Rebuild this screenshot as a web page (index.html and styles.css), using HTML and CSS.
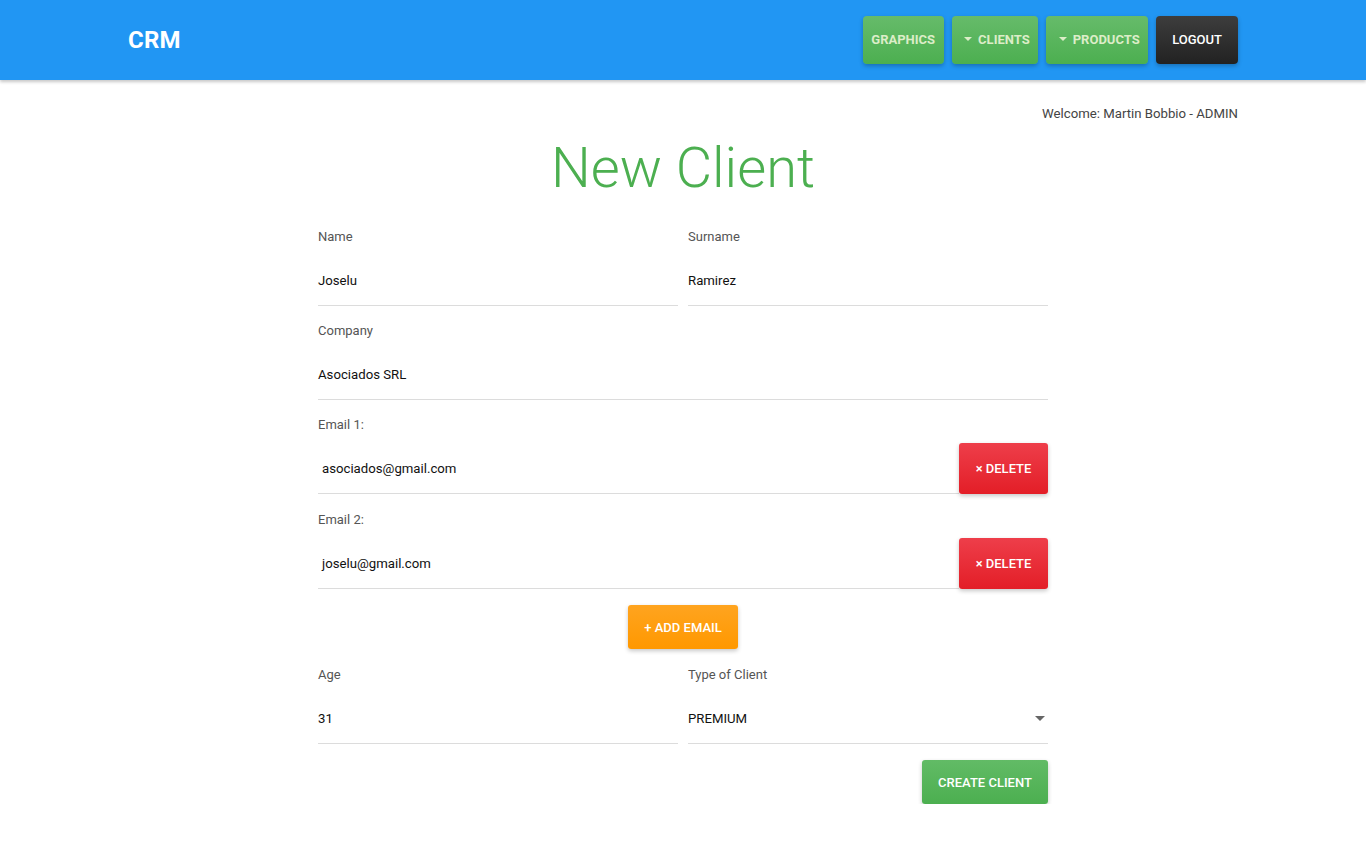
FILE: index.html
```html
<!DOCTYPE html>
<html lang="en">
<head>
<meta charset="utf-8">
<title>CRM - New Client</title>
<link rel="stylesheet" href="styles.css">
</head>
<body>
<header class="topbar">
  <div class="container topbar-inner">
    <a class="brand" href="#">CRM</a>
    <nav class="nav">
      <a class="nav-btn green" href="#">GRAPHICS</a>
      <a class="nav-btn green" href="#"><span class="caret"></span>CLIENTS</a>
      <a class="nav-btn green" href="#"><span class="caret"></span>PRODUCTS</a>
      <a class="nav-btn dark" href="#">LOGOUT</a>
    </nav>
  </div>
</header>

<main class="container">
  <p class="welcome">Welcome: Martin Bobbio - ADMIN</p>
  <h1 class="title">New Client</h1>

  <form class="form">
    <div class="row">
      <div class="group">
        <label class="label">Name</label>
        <div class="input">Joselu</div>
      </div>
      <div class="group">
        <label class="label">Surname</label>
        <div class="input">Ramirez</div>
      </div>
    </div>

    <div class="group">
      <label class="label">Company</label>
      <div class="input">Asociados SRL</div>
    </div>

    <div class="group email-group">
      <label class="label">Email 1:</label>
      <div class="email-row">
        <div class="input email">asociados@gmail.com</div>
        <button type="button" class="btn red">× DELETE</button>
      </div>
    </div>

    <div class="group email-group">
      <label class="label">Email 2:</label>
      <div class="email-row">
        <div class="input email">joselu@gmail.com</div>
        <button type="button" class="btn red">× DELETE</button>
      </div>
    </div>

    <div class="center">
      <button type="button" class="btn orange add">+ ADD EMAIL</button>
    </div>

    <div class="row">
      <div class="group">
        <label class="label">Age</label>
        <div class="input">31</div>
      </div>
      <div class="group">
        <label class="label">Type of Client</label>
        <div class="input select">PREMIUM<span class="sel-caret"></span></div>
      </div>
    </div>

    <div class="right">
      <button type="button" class="btn green-btn create">CREATE CLIENT</button>
    </div>
  </form>
</main>
</body>
</html>
```

FILE: styles.css
```css
* { box-sizing: border-box; }

html, body {
  margin: 0;
  padding: 0;
}

body {
  font-family: Roboto, "Liberation Sans", Arial, sans-serif;
  color: #212529;
  background: #fff;
  font-size: 14px;
}

.container {
  width: 1110px;
  margin: 0 auto;
}

.topbar {
  background: #2196f3;
  height: 80px;
  box-shadow: 0 2px 3px rgba(0,0,0,0.22);
}

.topbar-inner {
  height: 80px;
  display: flex;
  align-items: center;
  justify-content: space-between;
}

.brand {
  color: #fff;
  font-weight: 700;
  font-size: 24px;
  text-decoration: none;
  letter-spacing: 0.2px;
}

.nav {
  display: flex;
  gap: 8px;
  align-items: center;
}

.nav-btn {
  height: 48px;
  display: flex;
  align-items: center;
  border-radius: 4px;
  text-decoration: none;
  font-size: 13px;
  padding-bottom: 2px;
  box-shadow: 0 2px 4px rgba(0,0,0,0.25);
}

.nav-btn.green {
  background: linear-gradient(#66bb6a, #4caf50);
  color: #dcedc8;
  font-weight: 700;
  padding-left: 8.5px;
  padding-right: 8.5px;
}

.nav-btn.dark {
  background: linear-gradient(#3d3d3d, #222);
  color: #fff;
  font-weight: 500;
  padding-left: 16px;
  padding-right: 16px;
}

.caret {
  width: 0;
  height: 0;
  border-left: 4px solid transparent;
  border-right: 4px solid transparent;
  border-top: 4px solid #dcedc8;
  margin: 0 6px 0 4px;
}

.welcome {
  margin: 0;
  padding-top: 25px;
  text-align: right;
  font-size: 13.2px;
  line-height: 17px;
  color: #444;
}

.title {
  margin: 11px 0 0;
  text-align: center;
  font-weight: 300;
  font-size: 56px;
  line-height: 70px;
  color: #4caf50;
}

.form {
  width: 730px;
  margin: 0 auto;
  padding-top: 24px;
}

.row {
  display: flex;
  gap: 10px;
}

.row > .group {
  flex: 1;
}

.group {
  margin-bottom: 15px;
}

.email-group {
  margin-bottom: 16px;
}

.label {
  display: block;
  font-size: 13px;
  line-height: 20px;
  color: #555;
  margin-bottom: 10px;
}

.input {
  height: 49px;
  border-bottom: 1px solid #dcdcdc;
  display: flex;
  align-items: center;
  font-size: 13.2px;
  color: #111;
  padding-bottom: 2px;
}

.email-row {
  display: flex;
  align-items: flex-end;
  margin-top: -2px;
}

.input.email {
  flex: 1;
  height: 51px;
  padding-left: 4px;
  padding-bottom: 0;
}

.select {
  justify-content: space-between;
  padding-right: 3px;
}

.sel-caret {
  width: 0;
  height: 0;
  border-left: 5px solid transparent;
  border-right: 5px solid transparent;
  border-top: 5px solid #666;
}

.btn {
  border: none;
  border-radius: 3px;
  font-family: Roboto, "Liberation Sans", Arial, sans-serif;
  font-size: 13px;
  font-weight: 500;
  color: #fff;
  box-shadow: 0 2px 4px rgba(0,0,0,0.22);
  cursor: pointer;
}

.btn.red {
  width: 89px;
  height: 51px;
  background: linear-gradient(#ee3e4a, #e31e27);
}

.center {
  display: flex;
  justify-content: center;
  margin-top: 1px;
  margin-bottom: 16px;
}

.btn.orange {
  background: linear-gradient(#ffa41f, #ff9800);
}

.add {
  width: 110px;
  height: 44px;
}

.right {
  display: flex;
  justify-content: flex-end;
  margin-top: 1px;
}

.btn.green-btn {
  background: linear-gradient(#62bb66, #4caf50);
}

.create {
  width: 126px;
  height: 44px;
}
```
